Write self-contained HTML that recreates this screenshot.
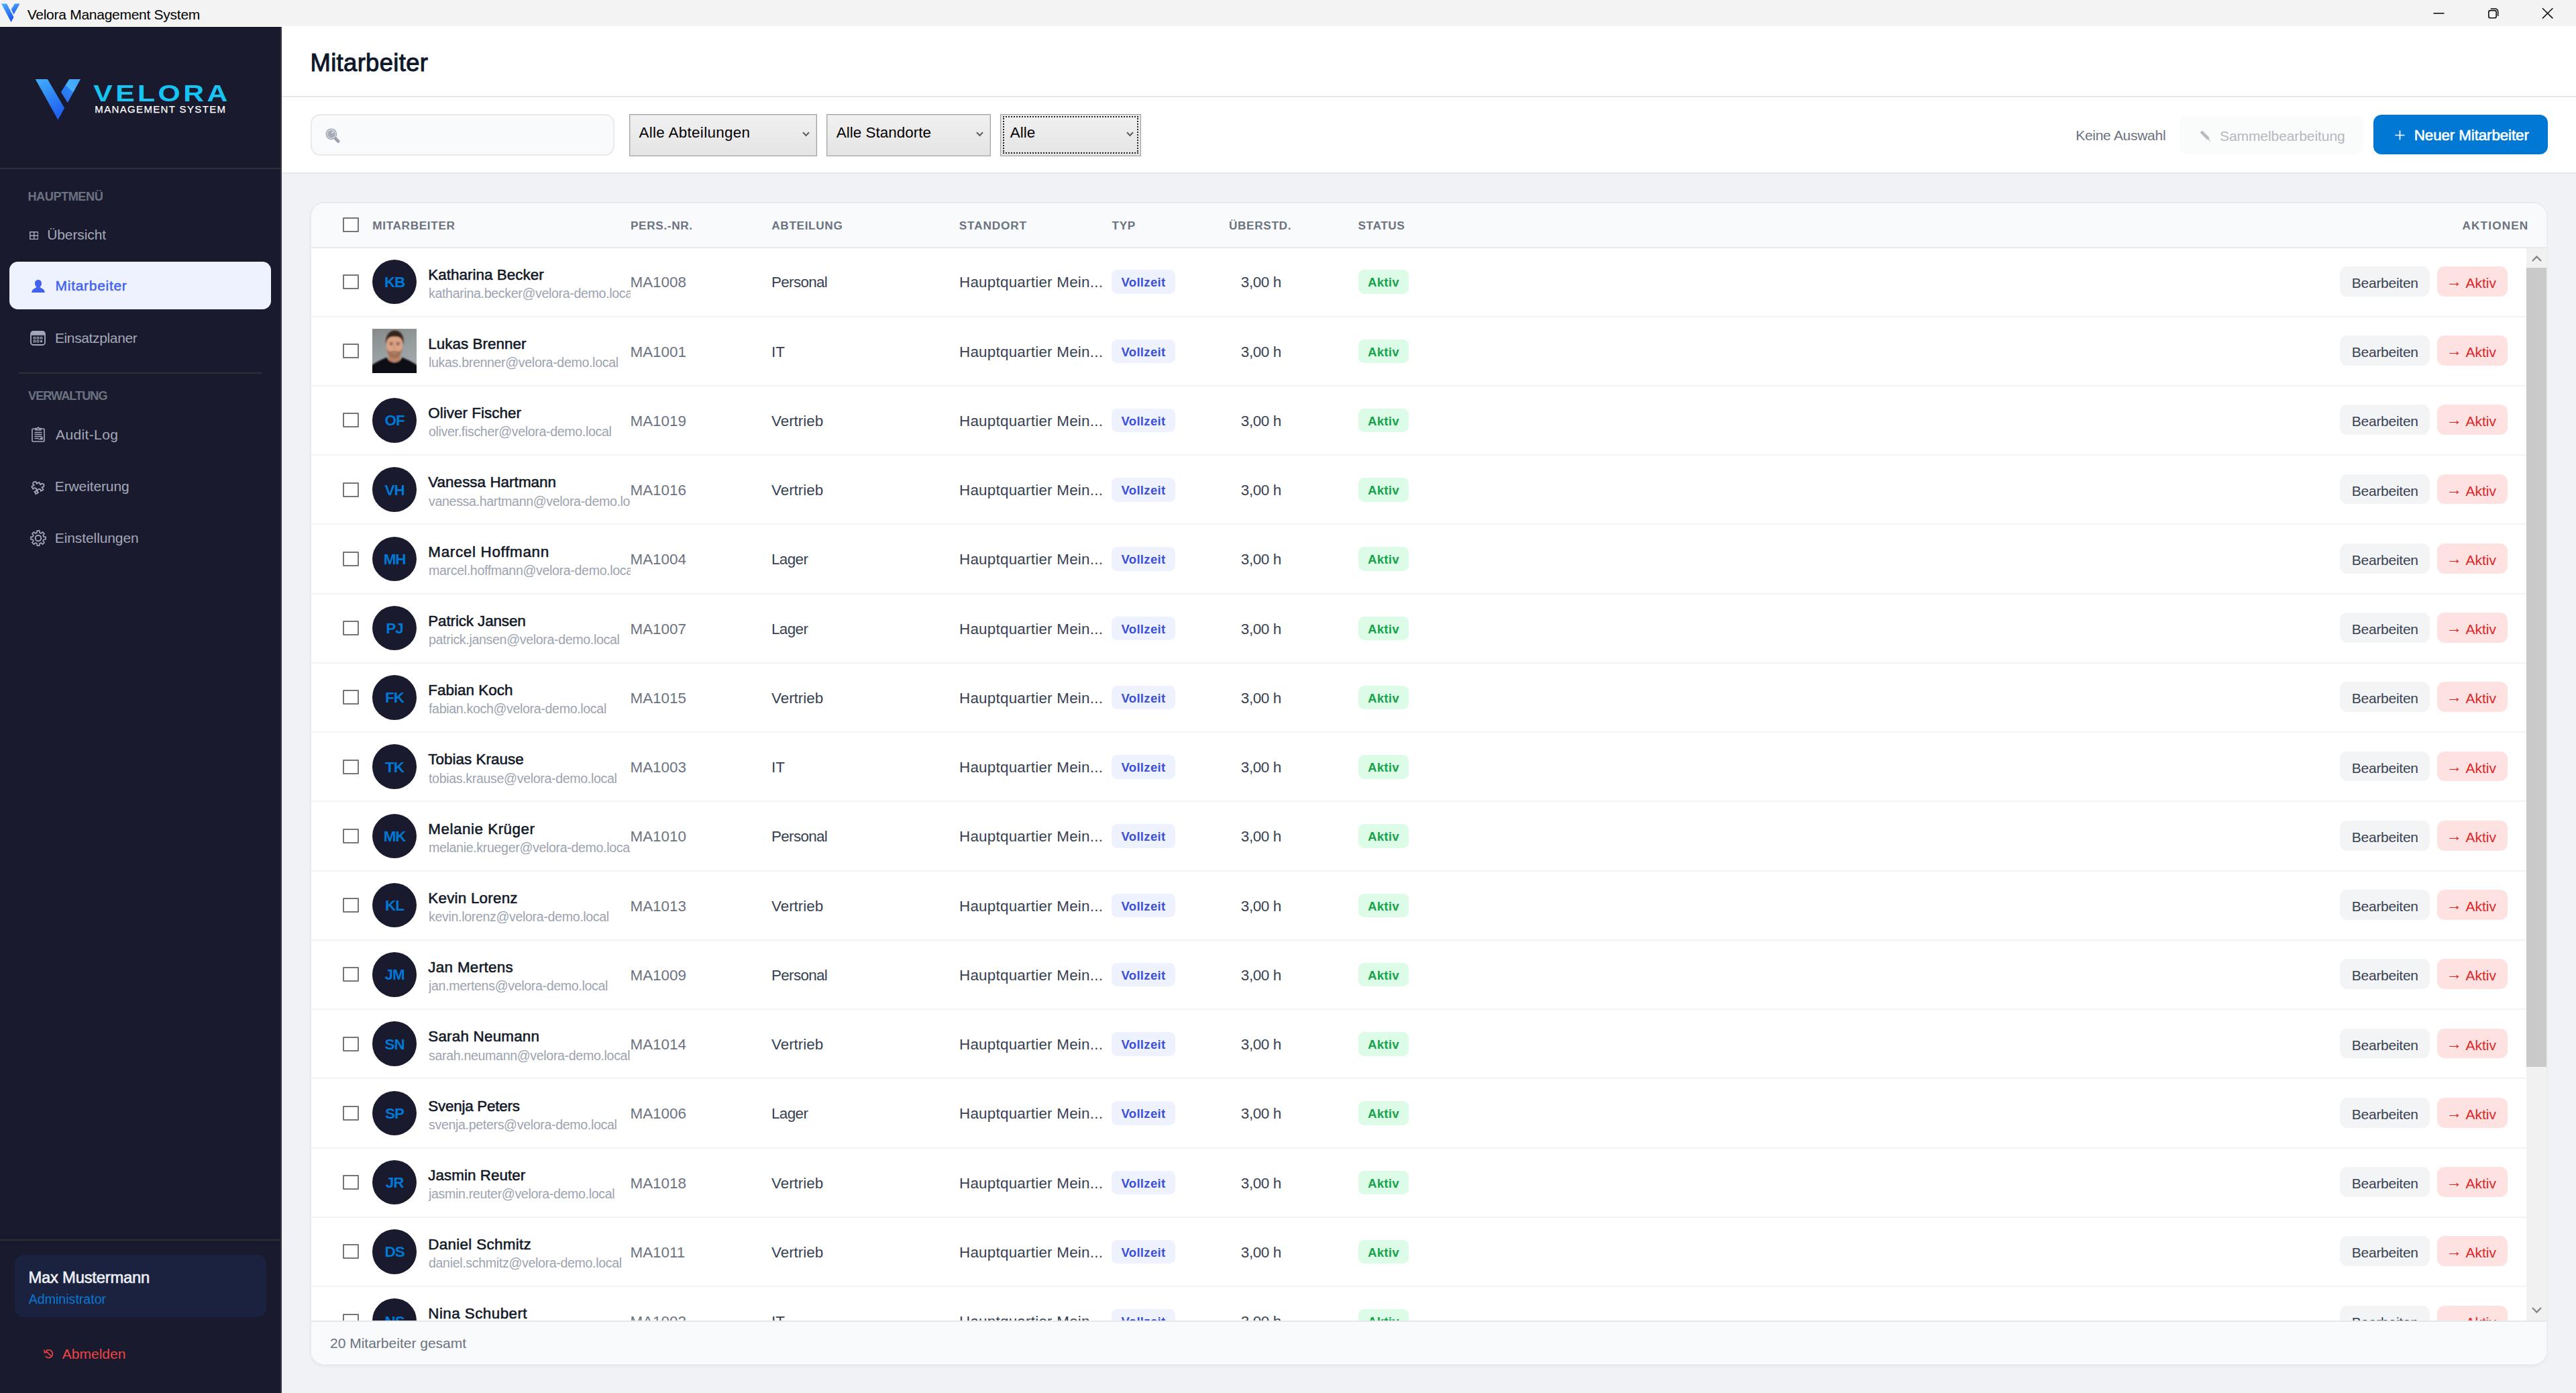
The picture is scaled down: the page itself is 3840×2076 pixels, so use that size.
<!DOCTYPE html>
<html lang="de"><head><meta charset="utf-8"><title>Velora Management System</title>
<style>
*{box-sizing:border-box;margin:0;padding:0}
html,body{width:3840px;height:2076px;overflow:hidden}
body{position:relative;background:#f0f2f6;font-family:"Liberation Sans",sans-serif;color:#374151;-webkit-font-smoothing:antialiased}
.abs,.tb *,.side *,.hdr *,.tool *{position:absolute}
.t{position:absolute;white-space:nowrap}
/* title bar */
.tb{position:absolute;left:0;top:0;width:3840px;height:40px;background:#f3f3f3;border-bottom:1px solid #fff}
.tb .ttl{left:40.7px;top:9.7px;font-size:21px;line-height:24px;color:#000;letter-spacing:-0.27px;white-space:nowrap}
/* sidebar */
.side{position:absolute;left:0;top:40px;width:420px;height:2036px;background:#1a1a2e;border-right:2px solid #37383f}
.side .hr{left:0;width:418px;height:2px;background:#2f2f3a}
.side .sec{font-size:18.2px;line-height:22px;font-weight:700;color:#6b7280;white-space:nowrap}
.side .ni{left:14px;width:390px;height:70.5px;border-radius:12.5px}
.side .ni.on{background:#eef2ff}
.side .nt{font-size:21px;line-height:24px;color:#a3a8b8;white-space:nowrap}
.side .nt.on{color:#4361ee;-webkit-text-stroke:0.5px #4361ee}
.side .user{left:22px;top:1830px;width:375px;height:92.5px;border-radius:14px;background:#1a2240}
.side .un{left:42.4px;font-size:23.8px;line-height:28px;font-weight:400;color:#eef0f5;-webkit-text-stroke:0.6px #eef0f5;letter-spacing:-0.22px;white-space:nowrap}
.side .ur{left:42.7px;font-size:19.6px;line-height:24px;color:#0a78d2;white-space:nowrap}
.side .lo{font-size:21px;line-height:24px;color:#ef4444;white-space:nowrap}
/* header */
.hdr{position:absolute;left:420px;top:40px;width:3420px;height:105px;background:#fff;border-bottom:2px solid #e6e8ec}
.hdr h1{left:42.5px;top:31.5px;font-size:36.4px;line-height:44px;font-weight:400;color:#0f172a;-webkit-text-stroke:1px #0f172a;letter-spacing:0.35px;white-space:nowrap}
/* toolbar */
.tool{position:absolute;left:420px;top:145px;width:3420px;height:114px;background:#fff;border-bottom:2px solid #e6e8ec}
.tool .search{left:42.5px;top:25px;width:453.5px;height:61.5px;border-radius:14px;background:#f9fafb;border:2px solid #e8eaed}
.tool .sel{top:25px;height:62.5px;border:1px solid #a4a4a4;box-shadow:inset 0 0 0 1px #d4d4d4;background:linear-gradient(#f1f1f1,#e4e4e4);font-size:22.4px;color:#000}
.tool .sel span{left:13.5px;top:13.8px;line-height:26px;white-space:nowrap;letter-spacing:0.33px}
.tool .sel svg{right:10px;top:24.5px}
.tool .sel .fr{left:2.5px;top:2px;right:2.5px;bottom:2.5px;border:2px dotted #222}
.tool .ka{font-size:21px;line-height:24px;color:#6b7280;white-space:nowrap}
.tool .sbtn{left:2829px;top:26.8px;width:274.4px;height:58.2px;border-radius:12px;background:#fafbfb}
.tool .sbtn span{font-size:22.4px;line-height:26px;color:#b4b8c0;white-space:nowrap}
.tool .nbtn{left:3118px;top:26.2px;width:260px;height:59.3px;border-radius:12px;background:#0078d4}
.tool .nbtn span{font-size:22.4px;line-height:26px;color:#fff;font-weight:400;-webkit-text-stroke:0.6px #fff;white-space:nowrap}
/* card */
.card{position:absolute;left:462px;top:301px;width:3335px;height:1734px;border:2px solid #e7e9ed;border-right-width:1px;border-radius:21px;background:#fff;overflow:hidden;box-shadow:0 2px 4px rgba(0,0,0,.04)}
.thead{position:absolute;left:0;top:0;width:100%;height:67px;background:#f9fafb;border-bottom:2px solid #e8eaed}
.th{position:absolute;top:21.8px;font-size:17.2px;line-height:22px;font-weight:700;color:#6b7280;white-space:nowrap;letter-spacing:0.65px}
.cb{position:absolute;left:47px;width:24px;height:22px;border:2px solid #767676;background:#fff;border-radius:1px}
.thead .cb{top:21px}
.tbody{position:absolute;left:0;top:67px;width:3302px;height:1598px;overflow:hidden;background:#fff}
.row{position:absolute;left:0;width:3302px;height:103.25px;border-bottom:2px solid #f3f4f6}
.row .cb{top:39.4px}
.av{position:absolute;left:90.8px;top:17.3px;padding-top:2px;width:66.5px;height:66.5px;border-radius:50%;background:#1a1a2e;color:#0078d4;font-weight:700;font-size:22.4px;display:flex;align-items:center;justify-content:center;letter-spacing:-1px}
.ph{position:absolute;left:91px;top:17.3px;width:66px;height:66px;overflow:hidden}
.ph svg{display:block}
.nm{position:absolute;left:174.3px;top:27.2px;font-size:22.4px;line-height:26px;font-weight:400;color:#111827;-webkit-text-stroke:0.55px #111827;white-space:nowrap;letter-spacing:0.05px}
.em{position:absolute;left:175px;top:55.6px;width:301px;overflow:hidden;font-size:19.6px;line-height:24px;color:#9ca3af;white-space:nowrap;letter-spacing:-0.34px}
.c{position:absolute;top:39px;font-size:22.4px;line-height:26px;white-space:nowrap}
.nr{left:475.5px;color:#6b7280}
.dp{left:686px;color:#374151}
.so{left:966px;color:#374151;letter-spacing:0.24px}
.st{left:1385.8px;color:#374151;letter-spacing:-0.35px}
.bd{position:absolute;top:33px;height:35.6px;padding-top:2.5px;border-radius:8.5px;font-size:18.5px;font-weight:700;display:flex;align-items:center;justify-content:center;white-space:nowrap}
.vz{left:1193.3px;width:94.4px;background:#eef2ff;color:#3b4fd8;letter-spacing:0.34px}
.ak{left:1561px;width:75px;background:#dcfce7;color:#16a34a;letter-spacing:0.35px}
.bt{position:absolute;top:27.4px;height:44.8px;padding-top:5.5px;border-radius:11px;font-size:21px;display:flex;align-items:center;justify-content:center;white-space:nowrap}
.be{left:3024.3px;width:134px;background:#f3f4f6;color:#374151;letter-spacing:-0.27px}
.ba{left:3169.3px;width:104.4px;background:#fee2e2;color:#dc2626;padding-right:2.5px}
/* scrollbar */
.sb{position:absolute;left:3302px;top:67px;width:30px;height:1598px;background:#f1f1f1}
.sbu{position:absolute;left:0;top:0;width:30px;height:30px}
.sbd{position:absolute;left:0;bottom:0;width:30px;height:30px}
.sbt{position:absolute;left:0;top:29px;width:30px;height:1191px;background:#c9c9c9}
/* footer */
.tfoot{position:absolute;left:0;top:1665px;width:100%;height:64px;background:#f9fafb;border-top:2px solid #e5e7eb}
.tfoot span{position:absolute;left:28px;top:19.5px;font-size:21px;line-height:24px;color:#6b7280;white-space:nowrap}
.dPersonal{letter-spacing:-0.65px}.dLager{letter-spacing:-0.6px}
.ar{position:relative;top:-2px;display:inline-block;transform:scaleX(1.12);margin-right:1px}

</style></head><body>
<div class="tb">
<svg style="left:2px;top:5px" width="28" height="28" viewBox="0 0 28 28"><defs><linearGradient id="g0" x1="0" y1="0" x2="0.6" y2="1"><stop offset="0" stop-color="#4db4ff"/><stop offset="1" stop-color="#1f57ee"/></linearGradient></defs><polygon points="0,0.5 8,0.5 18.5,20.5 14.5,28" fill="url(#g0)"/><polygon points="20,0.5 27.5,0.5 18.5,16.5 14.5,9" fill="url(#g0)"/></svg>
<span class="ttl">Velora Management System</span>
<svg style="left:3620px;top:0" width="200" height="40" viewBox="0 0 200 40"><g fill="none" stroke="#111" stroke-width="1.6"><path d="M7.5 19.8 H23.5"/><rect x="89.8" y="15.6" width="11.4" height="11.2" rx="2.6"/><path d="M92.8 13 H99.5 a4.2 4.2 0 0 1 4.2 4.2 V24"/><path d="M170 12.2 L185.4 27.4 M185.4 12.2 L170 27.4"/></g></svg>
</div>

<div class="side">
<svg style="left:0;top:0" width="418" height="200" viewBox="0 0 418 200"><defs><linearGradient id="g1" x1="0" y1="0" x2="0.5" y2="1"><stop offset="0" stop-color="#43b0fb"/><stop offset="1" stop-color="#1f63f2"/></linearGradient><linearGradient id="g2" x1="1" y1="0" x2="0.2" y2="1"><stop offset="0" stop-color="#3f9ff8"/><stop offset="0.5" stop-color="#47b2fc"/><stop offset="0.55" stop-color="#2c82f4"/><stop offset="1" stop-color="#2a6ff2"/></linearGradient></defs>
<polygon points="52.8,78 70.9,78 96.1,120.9 86.4,138.6" fill="url(#g1)"/>
<polygon points="103.2,78 120,78 100.8,113 90.9,97.2" fill="url(#g2)"/>
<text transform="translate(139.3,110.8) scale(1.2,1)" x="0" y="0" font-family="Liberation Sans, sans-serif" font-weight="700" font-size="35.6" fill="#16c4f4" textLength="166.6" lengthAdjust="spacing">VELORA</text>
<text x="141.3" y="128" font-family="Liberation Sans, sans-serif" font-size="15" fill="#ffffff" stroke="#ffffff" stroke-width="0.25" textLength="194.7" lengthAdjust="spacing">MANAGEMENT SYSTEM</text>
</svg>
<div class="hr" style="top:210px"></div>
<span class="sec" style="left:41.4px;top:241.5px;letter-spacing:-0.47px">HAUPTMENÜ</span>

<div class="ni" style="top:273.8px"></div>
<svg style="left:43.5px;top:304.6px" width="13.5" height="12.4" viewBox="0 0 13.5 12.4"><path d="M0.8 0.8 H12.7 V11.6 H0.8 Z M6.75 0.8 V11.6 M0.8 6.2 H12.7" fill="none" stroke="#a3a8b8" stroke-width="1.5"/></svg>
<span class="nt" style="left:70.2px;top:297.6px;letter-spacing:-0.1px">Übersicht</span>

<div class="ni on" style="top:350.3px"></div>
<svg style="left:46.5px;top:377px" width="20" height="19" viewBox="0 0 20 19"><path d="M10 0 C13.2 0 15 2.4 15 5.2 C15 7.6 14 9.6 12.6 10.6 C12.8 11.6 13.6 12 15 12.6 C17.6 13.6 19.4 15.6 19.8 19 L0.2 19 C0.6 15.6 2.4 13.6 5 12.6 C6.4 12 7.2 11.6 7.4 10.6 C6 9.6 5 7.6 5 5.2 C5 2.4 6.8 0 10 0 Z" fill="#4361ee"/></svg>
<span class="nt on" style="left:82.6px;top:374.4px;letter-spacing:0.7px">Mitarbeiter</span>

<div class="ni" style="top:426.8px"></div>
<svg style="left:45px;top:452.5px" width="23" height="22" viewBox="0 0 23 22"><rect x="1" y="1" width="21" height="20" rx="3.5" fill="none" stroke="#a3a8b8" stroke-width="1.8"/><path d="M1.5 4.5 a3 3 0 0 1 3 -3 h14 a3 3 0 0 1 3 3 v2.2 h-20 z" fill="#a3a8b8"/><g fill="none" stroke="#a3a8b8" stroke-width="1.1"><rect x="5.2" y="9.4" width="2.6" height="2.6"/><rect x="10.2" y="9.4" width="2.6" height="2.6"/><rect x="15.2" y="9.4" width="2.6" height="2.6"/><rect x="5.2" y="14.4" width="2.6" height="2.6"/><rect x="10.2" y="14.4" width="2.6" height="2.6"/></g><rect x="15" y="14.2" width="3" height="3" fill="#a3a8b8"/></svg>
<span class="nt" style="left:81.9px;top:451.5px;letter-spacing:-0.36px">Einsatzplaner</span>

<div class="hr" style="left:28px;width:362px;top:515px"></div>
<span class="sec" style="left:42px;top:539.3px;letter-spacing:-1.0px">VERWALTUNG</span>

<svg style="left:46.5px;top:596px" width="20" height="23" viewBox="0 0 20 23"><g fill="none" stroke="#a3a8b8" stroke-width="1.6"><path d="M6 3 H2 a1 1 0 0 0 -1 1 V21 a1 1 0 0 0 1 1 H18 a1 1 0 0 0 1 -1 V4 a1 1 0 0 0 -1 -1 H14"/><path d="M6 4.6 V2.6 H8.2 L10 0.9 L11.8 2.6 H14 V4.6 Z"/><path d="M4.5 8.5 H15.5 M4.5 11.5 H15.5 M4.5 14.5 H15.5 M4.5 17.5 H11"/><path d="M16 15.5 V18.5 H12.5 L16 15.5"/></g></svg>
<span class="nt" style="left:83px;top:596.1px;letter-spacing:0.37px">Audit-Log</span>

<svg style="left:43.5px;top:672px" width="26" height="26" viewBox="0 0 26 26"><g transform="translate(12.6,12.8) rotate(-30) scale(1.16) translate(-1.7,1.7)"><path d="M-5.5 -5.5 H-1.8 a2.3 2.3 0 1 1 3.6 0 H5.5 V-1.8 a2.3 2.3 0 1 1 0 3.6 V5.5 H1.8 a2.3 2.3 0 1 0 -3.6 0 H-5.5 V1.8 a2.3 2.3 0 1 0 0 -3.6 Z" fill="none" stroke="#a3a8b8" stroke-width="1.55" stroke-linejoin="round"/></g></svg>
<span class="nt" style="left:81.8px;top:672.7px;letter-spacing:-0.12px">Erweiterung</span>

<svg style="left:44.5px;top:749.5px" width="24" height="24" viewBox="0 0 24 24"><path d="M10.00 3.94 L10.16 0.95 L13.84 0.95 L14.00 3.94 L16.28 4.89 L18.51 2.89 L21.11 5.49 L19.11 7.72 L20.06 10.00 L23.05 10.16 L23.05 13.84 L20.06 14.00 L19.11 16.28 L21.11 18.51 L18.51 21.11 L16.28 19.11 L14.00 20.06 L13.84 23.05 L10.16 23.05 L10.00 20.06 L7.72 19.11 L5.49 21.11 L2.89 18.51 L4.89 16.28 L3.94 14.00 L0.95 13.84 L0.95 10.16 L3.94 10.00 L4.89 7.72 L2.89 5.49 L5.49 2.89 L7.72 4.89 Z" fill="none" stroke="#a3a8b8" stroke-width="1.7" stroke-linejoin="round"/><circle cx="12" cy="12" r="4.3" fill="none" stroke="#a3a8b8" stroke-width="1.9"/></svg>
<span class="nt" style="left:81.8px;top:749.9px;letter-spacing:-0.1px">Einstellungen</span>

<div class="hr" style="top:1807px"></div>
<div class="user"></div>
<span class="un" style="top:1850.4px">Max Mustermann</span>
<span class="ur" style="top:1883.7px">Administrator</span>
<svg style="left:64.5px;top:1970px" width="16" height="15" viewBox="0 0 16 15"><g fill="none" stroke="#ef4444" stroke-width="1.7"><path d="M3.2 3.6 a5.9 5.9 0 1 1 -0.4 7.6"/><path d="M3.4 3.4 L12.4 12"/><path d="M0.8 1.6 L1.4 5.8 L5.6 5.2" stroke-width="1.5"/></g></svg>
<span class="lo" style="left:92.8px;top:1965.7px">Abmelden</span>
</div>

<div class="hdr"><h1>Mitarbeiter</h1></div>

<div class="tool">
<div class="search"></div>
<svg style="left:64.6px;top:46.4px" width="22" height="22" viewBox="0 0 22 22"><path d="M14.6 14.8 L19.2 19.6" stroke="#9aa0ad" stroke-width="4.6" stroke-linecap="round"/><circle cx="8.9" cy="8.8" r="7.7" fill="#e3e5ea" stroke="#9fa4b0" stroke-width="1.4"/><circle cx="8.9" cy="8.8" r="5.9" fill="#a7acb9"/><circle cx="10.9" cy="6.3" r="1.3" fill="#e9ebf0"/></svg>
<div class="sel" style="left:518px;width:279.7px"><span>Alle Abteilungen</span><svg width="11" height="8" viewBox="0 0 11 8"><path d="M1 1.2 L5.5 6 L10 1.2" fill="none" stroke="#606060" stroke-width="2.1"/></svg></div>
<div class="sel" style="left:812.2px;width:245px"><span style="letter-spacing:0.05px">Alle Standorte</span><svg width="11" height="8" viewBox="0 0 11 8"><path d="M1 1.2 L5.5 6 L10 1.2" fill="none" stroke="#606060" stroke-width="2.1"/></svg></div>
<div class="sel" style="left:1071.3px;width:209.6px"><i class="fr"></i><span style="letter-spacing:0">Alle</span><svg width="11" height="8" viewBox="0 0 11 8"><path d="M1 1.2 L5.5 6 L10 1.2" fill="none" stroke="#606060" stroke-width="2.1"/></svg></div>
<span class="ka" style="left:2674.2px;top:45px;letter-spacing:-0.28px">Keine Auswahl</span>
<div class="sbtn"><svg style="left:30px;top:22.5px" width="17" height="17" viewBox="0 0 17 17"><path d="M0.6 3.6 L3.8 0.4 L13.6 10.2 L15 15 L10.4 13.4 Z" fill="#b7bac1"/><path d="M14.2 15.4 L16.2 16.6" stroke="#c9ccd2" stroke-width="1.5"/></svg><span style="left:60px;top:18.4px;font-size:21px;letter-spacing:-0.08px">Sammelbearbeitung</span></div>
<div class="nbtn"><svg style="left:31.5px;top:22.5px" width="15" height="15" viewBox="0 0 15 15"><path d="M7.5 0.5 V14.5 M0.5 7.5 H14.5" stroke="#fff" stroke-width="1.7"/></svg><span style="left:60.8px;top:17.8px;font-size:22.4px;letter-spacing:-0.12px">Neuer Mitarbeiter</span></div>
</div>

<div class="card">
<div class="thead">
<i class="cb"></i>
<span class="th" style="left:91.3px">MITARBEITER</span>
<span class="th" style="left:476px">PERS.-NR.</span>
<span class="th" style="left:686.3px">ABTEILUNG</span>
<span class="th" style="left:965.8px;letter-spacing:0.85px">STANDORT</span>
<span class="th" style="left:1193.6px">TYP</span>
<span class="th" style="left:1368px">ÜBERSTD.</span>
<span class="th" style="left:1560.4px">STATUS</span>
<span class="th" style="right:26.6px;letter-spacing:1.15px">AKTIONEN</span>
</div>
<div class="tbody">
<div class="row" style="top:-0.60px">
<i class="cb"></i><div class="av"><span>KB</span></div>
<div class="nm">Katharina Becker</div><div class="em">katharina.becker@velora-demo.local</div>
<div class="c nr">MA1008</div><div class="c dp dPersonal">Personal</div><div class="c so">Hauptquartier Mein...</div>
<div class="bd vz">Vollzeit</div><div class="c st">3,00 h</div><div class="bd ak">Aktiv</div>
<div class="bt be">Bearbeiten</div><div class="bt ba"><span class="ar">→</span>&nbsp;Aktiv</div>
</div>
<div class="row" style="top:102.65px">
<i class="cb"></i><div class="ph"><svg width="66" height="66" viewBox="0 0 66 66"><defs><linearGradient id="pbg" x1="0" y1="0" x2="0.3" y2="1"><stop offset="0" stop-color="#858989"/><stop offset="0.55" stop-color="#979ea0"/><stop offset="1" stop-color="#a3a9ab"/></linearGradient><filter id="pbl" x="-10%" y="-10%" width="120%" height="120%"><feGaussianBlur stdDeviation="1"/></filter></defs><rect width="66" height="66" fill="url(#pbg)"/><g filter="url(#pbl)"><path d="M24 34 L24 50 L42 50 L42 34 Z" fill="#b98268"/><path d="M-3 70 L-3 56 C6 49 15 45.5 21.5 42.5 C26 52.5 40 52.5 44.5 42.5 C51 45.5 60 49 69 56 L69 70 Z" fill="#090b15"/><path d="M20.8 21 C20.8 12 25 8 33 8 C41 8 45.2 12 45.2 21 C45.2 27 44.6 32 42.2 36.5 C39.8 41 36.5 43.5 33 43.5 C29.5 43.5 26.2 41 23.8 36.5 C21.4 32 20.8 27 20.8 21 Z" fill="#dca384"/><path d="M21.3 28 C22 38 27 44 33 44 C39 44 44 38 44.7 28 C43 33 41 34.5 38 33.5 C35.5 32.7 30.5 32.7 28 33.5 C25 34.5 23 33 21.3 28 Z" fill="#94684f" opacity="0.85"/><path d="M29 36.2 C31 35.4 35 35.4 37 36.2 C35 37.4 31 37.4 29 36.2 Z" fill="#c98e78"/><path d="M20.3 25 C18.6 11 25 2.5 33.5 2.5 C42.5 2.5 48.6 11 46 25 C45.6 18 43 13.2 39 12.2 C35 11.2 30 11.4 27 12.4 C23.4 13.6 20.8 18 20.3 25 Z" fill="#35261f"/><ellipse cx="28.3" cy="23.2" rx="2.6" ry="1.1" fill="#5b4034"/><ellipse cx="38" cy="23.2" rx="2.6" ry="1.1" fill="#5b4034"/><path d="M24.8 20.6 L31 20.3 M35.3 20.3 L41.5 20.6" stroke="#4a3329" stroke-width="1"/><path d="M33.2 24 L32.4 30.2 L34.6 30.2" fill="none" stroke="#b9805f" stroke-width="0.9"/></g></svg>
</div>
<div class="nm">Lukas Brenner</div><div class="em">lukas.brenner@velora-demo.local</div>
<div class="c nr">MA1001</div><div class="c dp dIT">IT</div><div class="c so">Hauptquartier Mein...</div>
<div class="bd vz">Vollzeit</div><div class="c st">3,00 h</div><div class="bd ak">Aktiv</div>
<div class="bt be">Bearbeiten</div><div class="bt ba"><span class="ar">→</span>&nbsp;Aktiv</div>
</div>
<div class="row" style="top:205.90px">
<i class="cb"></i><div class="av"><span>OF</span></div>
<div class="nm">Oliver Fischer</div><div class="em">oliver.fischer@velora-demo.local</div>
<div class="c nr">MA1019</div><div class="c dp dVertrieb">Vertrieb</div><div class="c so">Hauptquartier Mein...</div>
<div class="bd vz">Vollzeit</div><div class="c st">3,00 h</div><div class="bd ak">Aktiv</div>
<div class="bt be">Bearbeiten</div><div class="bt ba"><span class="ar">→</span>&nbsp;Aktiv</div>
</div>
<div class="row" style="top:309.15px">
<i class="cb"></i><div class="av"><span>VH</span></div>
<div class="nm">Vanessa Hartmann</div><div class="em">vanessa.hartmann@velora-demo.local</div>
<div class="c nr">MA1016</div><div class="c dp dVertrieb">Vertrieb</div><div class="c so">Hauptquartier Mein...</div>
<div class="bd vz">Vollzeit</div><div class="c st">3,00 h</div><div class="bd ak">Aktiv</div>
<div class="bt be">Bearbeiten</div><div class="bt ba"><span class="ar">→</span>&nbsp;Aktiv</div>
</div>
<div class="row" style="top:412.40px">
<i class="cb"></i><div class="av"><span>MH</span></div>
<div class="nm" style="letter-spacing:0.70px">Marcel Hoffmann</div><div class="em">marcel.hoffmann@velora-demo.local</div>
<div class="c nr">MA1004</div><div class="c dp dLager">Lager</div><div class="c so">Hauptquartier Mein...</div>
<div class="bd vz">Vollzeit</div><div class="c st">3,00 h</div><div class="bd ak">Aktiv</div>
<div class="bt be">Bearbeiten</div><div class="bt ba"><span class="ar">→</span>&nbsp;Aktiv</div>
</div>
<div class="row" style="top:515.65px">
<i class="cb"></i><div class="av"><span>PJ</span></div>
<div class="nm" style="letter-spacing:-0.11px">Patrick Jansen</div><div class="em">patrick.jansen@velora-demo.local</div>
<div class="c nr">MA1007</div><div class="c dp dLager">Lager</div><div class="c so">Hauptquartier Mein...</div>
<div class="bd vz">Vollzeit</div><div class="c st">3,00 h</div><div class="bd ak">Aktiv</div>
<div class="bt be">Bearbeiten</div><div class="bt ba"><span class="ar">→</span>&nbsp;Aktiv</div>
</div>
<div class="row" style="top:618.90px">
<i class="cb"></i><div class="av"><span>FK</span></div>
<div class="nm">Fabian Koch</div><div class="em">fabian.koch@velora-demo.local</div>
<div class="c nr">MA1015</div><div class="c dp dVertrieb">Vertrieb</div><div class="c so">Hauptquartier Mein...</div>
<div class="bd vz">Vollzeit</div><div class="c st">3,00 h</div><div class="bd ak">Aktiv</div>
<div class="bt be">Bearbeiten</div><div class="bt ba"><span class="ar">→</span>&nbsp;Aktiv</div>
</div>
<div class="row" style="top:722.15px">
<i class="cb"></i><div class="av"><span>TK</span></div>
<div class="nm">Tobias Krause</div><div class="em">tobias.krause@velora-demo.local</div>
<div class="c nr">MA1003</div><div class="c dp dIT">IT</div><div class="c so">Hauptquartier Mein...</div>
<div class="bd vz">Vollzeit</div><div class="c st">3,00 h</div><div class="bd ak">Aktiv</div>
<div class="bt be">Bearbeiten</div><div class="bt ba"><span class="ar">→</span>&nbsp;Aktiv</div>
</div>
<div class="row" style="top:825.40px">
<i class="cb"></i><div class="av"><span>MK</span></div>
<div class="nm" style="letter-spacing:0.53px">Melanie Krüger</div><div class="em">melanie.krueger@velora-demo.local</div>
<div class="c nr">MA1010</div><div class="c dp dPersonal">Personal</div><div class="c so">Hauptquartier Mein...</div>
<div class="bd vz">Vollzeit</div><div class="c st">3,00 h</div><div class="bd ak">Aktiv</div>
<div class="bt be">Bearbeiten</div><div class="bt ba"><span class="ar">→</span>&nbsp;Aktiv</div>
</div>
<div class="row" style="top:928.65px">
<i class="cb"></i><div class="av"><span>KL</span></div>
<div class="nm" style="letter-spacing:0.23px">Kevin Lorenz</div><div class="em">kevin.lorenz@velora-demo.local</div>
<div class="c nr">MA1013</div><div class="c dp dVertrieb">Vertrieb</div><div class="c so">Hauptquartier Mein...</div>
<div class="bd vz">Vollzeit</div><div class="c st">3,00 h</div><div class="bd ak">Aktiv</div>
<div class="bt be">Bearbeiten</div><div class="bt ba"><span class="ar">→</span>&nbsp;Aktiv</div>
</div>
<div class="row" style="top:1031.90px">
<i class="cb"></i><div class="av"><span>JM</span></div>
<div class="nm" style="letter-spacing:0.32px">Jan Mertens</div><div class="em">jan.mertens@velora-demo.local</div>
<div class="c nr">MA1009</div><div class="c dp dPersonal">Personal</div><div class="c so">Hauptquartier Mein...</div>
<div class="bd vz">Vollzeit</div><div class="c st">3,00 h</div><div class="bd ak">Aktiv</div>
<div class="bt be">Bearbeiten</div><div class="bt ba"><span class="ar">→</span>&nbsp;Aktiv</div>
</div>
<div class="row" style="top:1135.15px">
<i class="cb"></i><div class="av"><span>SN</span></div>
<div class="nm" style="letter-spacing:0.22px">Sarah Neumann</div><div class="em">sarah.neumann@velora-demo.local</div>
<div class="c nr">MA1014</div><div class="c dp dVertrieb">Vertrieb</div><div class="c so">Hauptquartier Mein...</div>
<div class="bd vz">Vollzeit</div><div class="c st">3,00 h</div><div class="bd ak">Aktiv</div>
<div class="bt be">Bearbeiten</div><div class="bt ba"><span class="ar">→</span>&nbsp;Aktiv</div>
</div>
<div class="row" style="top:1238.40px">
<i class="cb"></i><div class="av"><span>SP</span></div>
<div class="nm" style="letter-spacing:-0.23px">Svenja Peters</div><div class="em">svenja.peters@velora-demo.local</div>
<div class="c nr">MA1006</div><div class="c dp dLager">Lager</div><div class="c so">Hauptquartier Mein...</div>
<div class="bd vz">Vollzeit</div><div class="c st">3,00 h</div><div class="bd ak">Aktiv</div>
<div class="bt be">Bearbeiten</div><div class="bt ba"><span class="ar">→</span>&nbsp;Aktiv</div>
</div>
<div class="row" style="top:1341.65px">
<i class="cb"></i><div class="av"><span>JR</span></div>
<div class="nm">Jasmin Reuter</div><div class="em">jasmin.reuter@velora-demo.local</div>
<div class="c nr">MA1018</div><div class="c dp dVertrieb">Vertrieb</div><div class="c so">Hauptquartier Mein...</div>
<div class="bd vz">Vollzeit</div><div class="c st">3,00 h</div><div class="bd ak">Aktiv</div>
<div class="bt be">Bearbeiten</div><div class="bt ba"><span class="ar">→</span>&nbsp;Aktiv</div>
</div>
<div class="row" style="top:1444.90px">
<i class="cb"></i><div class="av"><span>DS</span></div>
<div class="nm" style="letter-spacing:0.31px">Daniel Schmitz</div><div class="em">daniel.schmitz@velora-demo.local</div>
<div class="c nr">MA1011</div><div class="c dp dVertrieb">Vertrieb</div><div class="c so">Hauptquartier Mein...</div>
<div class="bd vz">Vollzeit</div><div class="c st">3,00 h</div><div class="bd ak">Aktiv</div>
<div class="bt be">Bearbeiten</div><div class="bt ba"><span class="ar">→</span>&nbsp;Aktiv</div>
</div>
<div class="row" style="top:1548.15px">
<i class="cb"></i><div class="av"><span>NS</span></div>
<div class="nm" style="letter-spacing:0.45px">Nina Schubert</div><div class="em">nina.schubert@velora-demo.local</div>
<div class="c nr">MA1002</div><div class="c dp dIT">IT</div><div class="c so">Hauptquartier Mein...</div>
<div class="bd vz">Vollzeit</div><div class="c st">3,00 h</div><div class="bd ak">Aktiv</div>
<div class="bt be">Bearbeiten</div><div class="bt ba"><span class="ar">→</span>&nbsp;Aktiv</div>
</div>
</div>
<div class="sb"><div class="sbu"><svg width="30" height="30" viewBox="0 0 30 30"><path d="M9 19 L15.5 12.5 L22 19" fill="none" stroke="#858585" stroke-width="2.3"/></svg></div><div class="sbt"></div><div class="sbd"><svg width="30" height="30" viewBox="0 0 30 30"><path d="M9 11 L15.5 17.5 L22 11" fill="none" stroke="#858585" stroke-width="2.3"/></svg></div></div>
<div class="tfoot"><span>20 Mitarbeiter gesamt</span></div>
</div>
</body></html>
